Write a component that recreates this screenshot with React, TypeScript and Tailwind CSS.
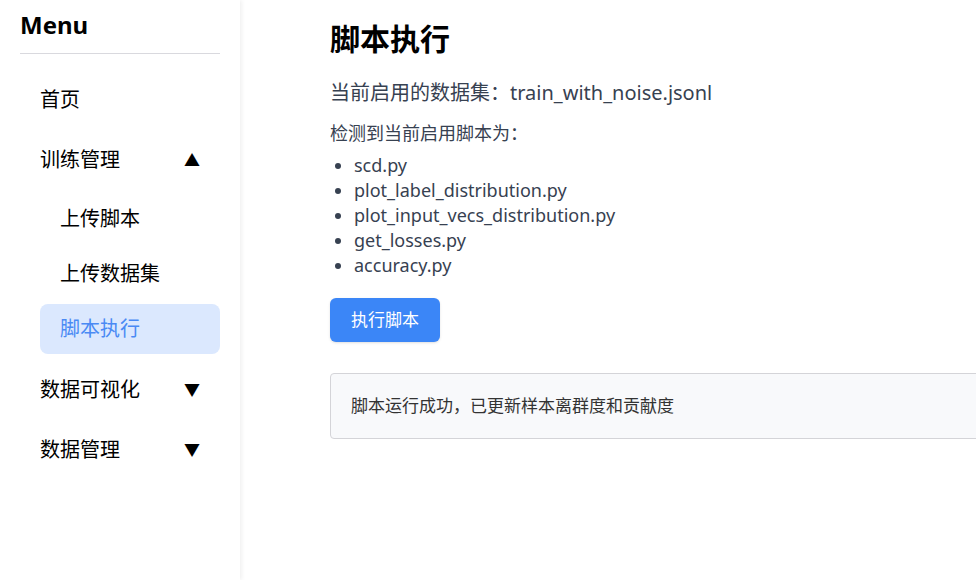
import React from "react";

const font = { fontFamily: '"Noto Sans", "Noto Sans CJK SC", sans-serif' };

const scripts = [
  "scd.py",
  "plot_label_distribution.py",
  "plot_input_vecs_distribution.py",
  "get_losses.py",
  "accuracy.py",
];

const Sidebar = () => {
  return (
    <aside className="w-[240px] shrink-0 h-[580px] bg-white px-5 shadow-[2px_0_4px_rgba(0,0,0,0.06)] z-10">
      <h2 className="pt-[9px] pb-[12px] text-2xl leading-8 font-bold text-black border-b border-[#d9d9de]">Menu</h2>
      <nav className="mt-[21px] flex flex-col text-xl text-black">
        <div className="h-[50px] px-5 flex items-center">首页</div>
        <div className="mt-[10px] h-[50px] px-5 flex items-center justify-between">
          <span>训练管理</span>
          <span className="text-base">▲</span>
        </div>
        <div className="mt-[9px] ml-5 flex flex-col gap-[5px]">
          <div className="h-[50px] px-5 flex items-center">上传脚本</div>
          <div className="h-[50px] px-5 flex items-center">上传数据集</div>
          <div className="h-[50px] px-5 flex items-center rounded-lg bg-[#dbe8fe] text-[#4a8af4]">脚本执行</div>
        </div>
        <div className="mt-[11px] h-[50px] px-5 flex items-center justify-between">
          <span>数据可视化</span>
          <span className="text-base">▼</span>
        </div>
        <div className="mt-[10px] h-[50px] px-5 flex items-center justify-between">
          <span>数据管理</span>
          <span className="text-base">▼</span>
        </div>
      </nav>
    </aside>
  );
};

const App = () => {
  return (
    <div className="flex w-[976px] h-[580px] overflow-hidden bg-white" style={font}>
      <Sidebar />
      <main className="flex-1 pl-[90px] pt-[21px] text-[#374151]">
        <h1 className="text-3xl leading-9 font-bold text-black">脚本执行</h1>
        <p className="mt-[22px] text-xl leading-7">当前启用的数据集：train_with_noise.jsonl</p>
        <p className="mt-[12px] text-lg leading-7">检测到当前启用脚本为：</p>
        <ul className="mt-[6px] list-disc pl-6 text-lg leading-[25px]">
          {scripts.map((s) => (
            <li key={s}>{s}</li>
          ))}
        </ul>
        <button className="mt-[20px] h-[44px] px-[21px] rounded-md bg-[#3b86f7] text-white text-[17px] shadow-sm">执行脚本</button>
        <div className="mt-[31px] w-[700px] h-[66px] flex items-center px-5 rounded border border-[#d4d4d8] bg-[#f8f9fb] text-[17px] text-[#333]">
          脚本运行成功，已更新样本离群度和贡献度
        </div>
      </main>
    </div>
  );
};

export default App;
